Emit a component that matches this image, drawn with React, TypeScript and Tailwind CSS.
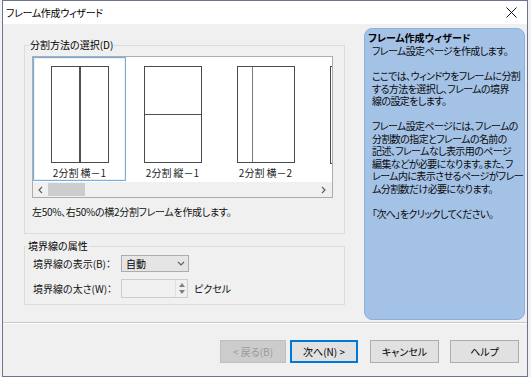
import React from "react";

const jp = "[font-family:'Noto_Sans_CJK_JP',sans-serif] [font-feature-settings:'palt']";

type FrameKind = "h1" | "v1" | "h2" | "h1b";

function FrameThumb({ kind }: { kind: FrameKind }) {
  return (
    <div className="relative w-[58px] h-[98px] border border-[#4a4a4a] bg-white flex">
      {kind === "h1" && (
        <>
          <div className="flex-1" />
          <div className="w-[2px] bg-[#505050]" />
          <div className="flex-1" />
        </>
      )}
      {kind === "v1" && (
        <div className="flex flex-col w-full">
          <div className="flex-1" />
          <div className="h-px bg-[#505050]" />
          <div className="flex-1" />
        </div>
      )}
      {kind === "h2" && (
        <>
          <div className="w-[14px]" />
          <div className="w-px bg-[#7a7a7a]" />
          <div className="flex-1" />
        </>
      )}
    </div>
  );
}

function Item({ kind, label, selected }: { kind: FrameKind; label: string; selected?: boolean }) {
  return (
    <div
      className={
        "shrink-0 w-[93px] h-[124px] border " + (selected ? "border-[#6fb0e8]" : "border-transparent")
      }
    >
      <div
        className={
          "h-full flex flex-col items-center pt-[7px] border " +
          (selected ? "border-[#f4eee8]" : "border-transparent")
        }
      >
        <FrameThumb kind={kind} />
        <div className="mt-[3px] text-[10px] leading-[13px] text-[#222] whitespace-nowrap">{label}</div>
      </div>
    </div>
  );
}

function Chevron({ dir }: { dir: "left" | "right" | "down" }) {
  const d = dir === "left" ? "M5 1 L2 4 L5 7" : dir === "right" ? "M2 1 L5 4 L2 7" : "M1 2 L4 5 L7 2";
  return (
    <svg width="8" height="8" viewBox="0 0 8 8">
      <path d={d} fill="none" stroke="#606060" strokeWidth="1.2" />
    </svg>
  );
}

function Button({ children, kind }: { children: React.ReactNode; kind?: "disabled" | "focus" }) {
  const cls =
    kind === "disabled"
      ? "bg-[#cccccc] border border-[#bfbfbf] text-[#9a9a9a]"
      : kind === "focus"
      ? "bg-[#e1e1e1] border-2 border-[#0078d7] text-black"
      : "bg-[#e1e1e1] border border-[#adadad] text-black";
  return (
    <div className={"h-[23px] flex items-center justify-center text-[10px] " + cls}>{children}</div>
  );
}

const info = [
  "フレーム設定ページを作成します。",
  "",
  "ここでは、ウィンドウをフレームに分割",
  "する方法を選択し、フレームの境界",
  "線の設定をします。",
  "",
  "フレーム設定ページには、フレームの",
  "分割数の指定とフレームの名前の",
  "記述、フレームなし表示用のページ",
  "編集などが必要になります。また、フ",
  "レーム内に表示させるページがフレー",
  "ム分割数だけ必要になります。",
  "",
  "「次へ」をクリックしてください。",
];

export default function App() {
  return (
    <div className={"w-[531px] h-[377px] bg-[#f2f2f7] flex overflow-hidden " + jp}>
      <div className="ml-[2px] w-[526px] h-[377px] border border-[#6b7490] bg-[#f0f0f0] flex flex-col">
        {/* title bar */}
        <div className="h-[23px] bg-white flex items-center justify-between pl-[3px] pr-[10px] shrink-0">
          <span className="text-[10px] tracking-[-0.3px] text-black">フレーム作成ウィザード</span>
          <svg width="11" height="11" viewBox="0 0 11 11">
            <path d="M0.5 0.5 L10.5 10.5 M10.5 0.5 L0.5 10.5" stroke="#111" strokeWidth="1" />
          </svg>
        </div>

        {/* body */}
        <div className="flex items-start pl-[21px] pr-[1px] h-[297px] shrink-0">
          <div className="w-[321px] mt-[14px] flex flex-col">
            <fieldset className="border border-[#dcdcdc] px-[7px] pb-[14px]">
              <legend className="-ml-[3px] px-[1px] text-[10px] leading-[14px] text-black">分割方法の選択(D)</legend>
              <div className="mt-[4px] w-[301px] h-[142px] border border-[#adadad] bg-white flex flex-col overflow-hidden">
                <div className="flex h-[125px] overflow-hidden">
                  <Item kind="h1" label="2分割 横－1" selected />
                  <Item kind="v1" label="2分割 縦－1" />
                  <Item kind="h2" label="2分割 横－2" />
                  <Item kind="h1b" label="" />
                </div>
                <div className="h-[15px] bg-[#f0f0f0] flex items-center px-[4px]">
                  <Chevron dir="left" />
                  <div className="ml-[3px] w-[37px] h-[13px] bg-[#cdcdcd]" />
                  <div className="flex-1" />
                  <Chevron dir="right" />
                </div>
              </div>
              <div className="mt-[7px] text-[10px] leading-[14px] tracking-[-0.3px] text-[#111]">左50%、右50%の横2分割フレームを作成します。</div>
            </fieldset>

            <fieldset className="mt-[5px] border border-[#dcdcdc] px-[8px] pb-[6px]">
              <legend className="-ml-[6px] px-[1px] text-[10px] leading-[14px] text-black">境界線の属性</legend>
              <div className="mt-[2px] flex items-center h-[17px]">
                <span className="w-[88px] text-[10px] text-[#111]">境界線の表示(B)：</span>
                <div className="w-[68px] h-[17px] bg-[#e5e5e5] border border-[#acacac] flex items-center justify-between pl-[4px] pr-[3px]">
                  <span className="text-[10px] text-black">自動</span>
                  <Chevron dir="down" />
                </div>
              </div>
              <div className="mt-[7px] flex items-center h-[19px]">
                <span className="w-[88px] text-[10px] text-[#111]">境界線の太さ(W)：</span>
                <div className="w-[67px] h-[19px] bg-[#f0f0f0] border border-[#cccccc] flex justify-end">
                  <div className="w-[12px] flex flex-col items-center justify-center gap-[3px] border-l border-[#e0e0e0]">
                    <svg width="6" height="4" viewBox="0 0 6 4"><path d="M0 4 L3 0 L6 4 Z" fill="#808080" /></svg>
                    <svg width="6" height="4" viewBox="0 0 6 4"><path d="M0 0 L3 4 L6 0 Z" fill="#808080" /></svg>
                  </div>
                </div>
                <span className="ml-[6px] text-[10px] text-[#111]">ピクセル</span>
              </div>
            </fieldset>
          </div>

          <div className="ml-[19px] mt-[4px] w-[161px] h-[292px] rounded-[8px] bg-[#a4c2e6] border border-[#8eb0da] pt-[2px] text-[10px] text-[#0a0a0a]">
            <div className="pl-[3px] font-bold leading-[14px] text-black">フレーム作成ウィザード</div>
            <div className="pl-[7px] tracking-[-0.6px]">
              {info.map((line, i) =>
                line ? (
                  <div key={i} className="leading-[12.5px] whitespace-nowrap">{line}</div>
                ) : (
                  <div key={i} className="h-[12.5px]" />
                )
              )}
            </div>
          </div>
        </div>

        {/* separator */}
        <div className="mt-[1px] h-[1px] bg-[#c8c8c8] shrink-0" />
        <div className="h-[1px] bg-white shrink-0" />

        {/* buttons */}
        <div className="mt-[16px] flex justify-end pr-[8px]">
          <div className="w-[66px]"><Button kind="disabled">&lt; 戻る(B)</Button></div>
          <div className="ml-[4px] w-[68px]"><Button kind="focus">次へ(N) &gt;</Button></div>
          <div className="ml-[12px] w-[69px]"><Button>キャンセル</Button></div>
          <div className="ml-[11px] w-[69px]"><Button>ヘルプ</Button></div>
        </div>
      </div>
    </div>
  );
}
